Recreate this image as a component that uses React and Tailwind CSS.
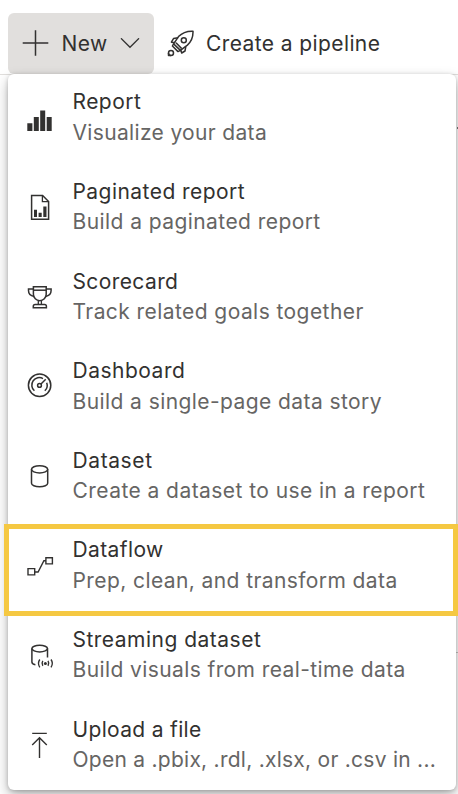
import React from "react";

const ink = "#323130";

const icons = {
  report: (
    <g fill={ink} stroke="none">
      <path d="M7.3 22.3h5.1V30H7.3zM13.8 15.9h5V30h-5zM20.2 9.4h5V30h-5zM26.7 15.9h5V30h-5z" />
    </g>
  ),
  paginated: (
    <>
      <path d="M11.6 4.4h11l6 6.1v17.8h-17z" />
      <path d="M22.4 4.6v6.1h6.1" strokeWidth="1.3" />
      <path d="M14 18.7h3V26h-3zM18.6 21.8h3.1V26h-3.1zM23.3 15.6h3.2V26h-3.2z" fill={ink} stroke="none" />
    </>
  ),
  scorecard: (
    <>
      <path d="M13.4 6.7h12.8v7.6a6.4 6.4 0 0 1-12.8 0z" />
      <path d="M13.4 10.2h12.8" />
      <path d="M13.4 8.9H8.5v1.6q0 5 5.6 5.9M26.2 8.9h4.9v1.6q0 5-5.6 5.9" />
      <path d="M18.3 20.9v3.6M21.4 20.9v3.6" strokeWidth="1.3" />
      <path d="M13.3 27.7v-1.5q0-1.8 1.8-1.8h9.5q1.8 0 1.8 1.8v1.5z" />
    </>
  ),
  dashboard: (
    <>
      <circle cx="19.6" cy="15.3" r="11.2" />
      <path d="M14.4 20.8A7.5 7.5 0 0 1 23 8.6M26.7 12.7a7.5 7.5 0 0 1-1.9 8.1" />
      <circle cx="19.5" cy="15.4" r="1.9" />
      <path d="M21 14l4.7-4.7" />
    </>
  ),
  dataset: (
    <>
      <ellipse cx="19.6" cy="10.3" rx="8.1" ry="3.6" />
      <path d="M11.5 10.3v14c0 2 3.6 3.5 8.1 3.5s8.1-1.5 8.1-3.5v-14" />
    </>
  ),
  dataflow: (
    <path strokeWidth="1.4" d="M8 19.6h6.7v6.3H8zM25.9 8.7h6.5v6.2h-6.5zM14.7 23h3.4l5.8-11.3h2" />
  ),
  streaming: (
    <>
      <ellipse cx="19.7" cy="10.6" rx="7.8" ry="3.3" />
      <path d="M11.9 10.6v13.5q0 2.2 3.5 2.7M27.5 10.6v8.8" />
      <circle cx="25.4" cy="25.4" r="1.5" fill={ink} stroke="none" />
      <path d="M22.8 22.9q-1.6 2.5 0 5M28 22.9q1.6 2.5 0 5M19.8 21.5q-2.7 3.9 0 7.8M31 21.5q2.7 3.9 0 7.8" strokeWidth="1.4" />
    </>
  ),
  upload: <path strokeWidth="1.4" d="M12.2 5.4h14.6M19.5 30V9.7M12.2 17l7.3-7.3 7.3 7.3" />,
};

const items = [
  { icon: "report", title: "Report", text: "Visualize your data", row: "h-[90px]", t: "pt-3 h-11 tracking-[0.45px]", s: "tracking-[0.34px]" },
  { icon: "paginated", title: "Paginated report", text: "Build a paginated report", row: "h-[89px]", t: "pt-3 h-[43px] tracking-[0.45px]", s: "tracking-[0.43px]" },
  { icon: "scorecard", title: "Scorecard", text: "Track related goals together", row: "h-[90px]", t: "pt-[13px] h-11 tracking-[0.4px]", s: "tracking-[0.43px]" },
  { icon: "dashboard", title: "Dashboard", text: "Build a single-page data story", row: "h-[89px]", t: "pt-3 h-11 tracking-[0.5px]", s: "tracking-[0.42px]" },
  { icon: "dataset", title: "Dataset", text: "Create a dataset to use in a report", row: "h-[90px]", t: "pt-[13px] h-11 tracking-[0.6px]", s: "tracking-[0.44px]" },
  { icon: "dataflow", title: "Dataflow", text: "Prep, clean, and transform data", row: "h-[89px]", t: "pt-3 h-11 tracking-[0.4px]", s: "tracking-[0.41px]", marked: true },
  { icon: "streaming", title: "Streaming dataset", text: "Build visuals from real-time data", row: "h-[90px]", t: "pt-[13px] h-11 tracking-[0.49px]", s: "tracking-[0.4px]" },
  { icon: "upload", title: "Upload a file", text: "Open a .pbix, .rdl, .xlsx, or .csv in ...", row: "h-[89px]", t: "pt-[13px] h-11 tracking-[0.33px]", s: "tracking-[0.26px]" },
];

function MenuItem({ icon, title, text, row, t, s, marked }) {
  return (
    <li className={`relative flex shrink-0 pl-3 ${row}`}>
      <svg className="mt-[27px] size-10 shrink-0" viewBox="0 0 40 40" fill="none" stroke={ink} strokeWidth="1.5">
        {icons[icon]}
      </svg>
      <div className="ml-[12.5px] whitespace-nowrap">
        <div className={`leading-[31px] text-[#323130] ${t}`}>{title}</div>
        <div className={`h-[30px] leading-[30px] text-[#666564] ${s}`}>{text}</div>
      </div>
      {marked && <div className="absolute top-[2px] -left-1 h-[92px] w-[454px] border-[5px] border-[#f5c842]" />}
    </li>
  );
}

export default function App() {
  return (
    <div className="relative flex h-[794px] w-[458px] flex-col overflow-hidden bg-white font-['Inter',sans-serif] text-[21px]">
      <header className="flex h-[75px] shrink-0 border-b border-[#e1dfdd] pt-[13px] pl-2 text-[#323130]">
        <button className="flex h-[61px] w-[146px] items-center rounded-[6px] bg-[#e1dfdd] pl-[14px]">
          <svg className="size-[27px]" viewBox="0 0 27 27" fill="none" stroke={ink} strokeWidth="1.5">
            <path d="M.7 13H26.3M13.5 .2V25.8" />
          </svg>
          <span className="ml-[12.5px] w-[58.5px] text-left tracking-[0.4px]">New</span>
          <svg className="h-3 w-5" viewBox="0 0 20 12" fill="none" stroke={ink} strokeWidth="1.3">
            <path d="M1 .3l9 9 9-9" />
          </svg>
        </button>
        <button className="ml-3 flex h-[61px] items-center">
          <svg className="size-7" viewBox="0 0 28 28" fill="none" stroke={ink} strokeWidth="1.5" strokeLinejoin="round">
            <path d="M27 1.2Q18 .8 12.5 6.6L7.6 13.9l6.8 6.5 7-5.3Q27.3 9.9 27 1.2z" />
            <circle cx="17.8" cy="10.2" r="2.5" />
            <path d="M12.1 7.8L7.5 8.6 5.4 12.2l4 .2M19.8 16.7l-.8 4.3-3.3 2-1.1-3.2M10 12.8l5.7 5.8M7.6 13.9L6.4 16l5.6 5.6 2.4-1.2" />
            <circle cx="5" cy="23" r="2.5" />
            <path d="M2.5 23v2.5H5" />
          </svg>
          <span className="ml-3 tracking-[0.4px]">Create a pipeline</span>
        </button>
      </header>
      <div className="absolute top-[652px] right-0 h-px w-[2px] bg-[#c8c6c4]" />
      <ul className="relative -mt-px ml-2 flex h-[716px] w-[448px] flex-col rounded-[6px] bg-white shadow-[0_6px_14px_rgba(0,0,0,0.28),0_1px_4px_rgba(0,0,0,0.2)]">
        {items.map((item) => (
          <MenuItem key={item.title} {...item} />
        ))}
      </ul>
      <div className="absolute top-[127px] right-0 h-[2px] w-px bg-[#666564]" />
    </div>
  );
}
